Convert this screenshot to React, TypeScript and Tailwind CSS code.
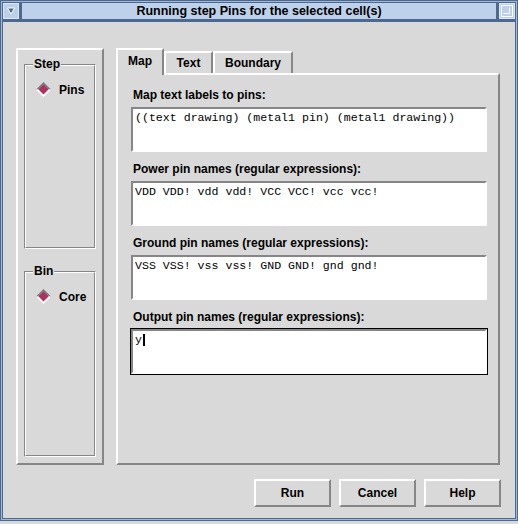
import React from "react";

const raised =
  "border-2 border-t-white border-l-white border-r-[#868686] border-b-[#868686]";
const sunken =
  "border-2 border-t-[#868686] border-l-[#868686] border-r-white border-b-white";

function Radio({ label }: { label: string }) {
  return (
    <div className="flex items-center gap-[8px] pl-[10px] pt-[16px]">
      <svg width="15" height="15" viewBox="0 0 15 15">
        <polygon points="7.5,0 15,7.5 0,7.5" fill="#7e7e7e" />
        <polygon points="0,7.5 15,7.5 7.5,15" fill="#ffffff" />
        <polygon points="7.5,2.5 12.5,7.5 7.5,12.5 2.5,7.5" fill="#b03060" />
      </svg>
      <span className="text-[12px] font-bold leading-[14px]">{label}</span>
    </div>
  );
}

function GroupBox({ title, option, h }: { title: string; option: string; h: string }) {
  return (
    <div className={`relative w-[72px] border border-t-[#868686] border-l-[#868686] border-r-white border-b-white ${h}`}>
      <div className="h-full border border-t-white border-l-white border-r-[#868686] border-b-[#868686]">
        <Radio label={option} />
      </div>
      <span className="absolute left-[8px] top-[-8px] bg-[#d9d9d9] px-px text-[12px] font-bold leading-[14px]">
        {title}
      </span>
    </div>
  );
}

function Field({ label, value, focus }: { label: string; value: string; focus?: boolean }) {
  return (
    <div className="flex flex-col">
      <div className="pl-[3px] text-[12px] font-bold leading-[14px]">{label}</div>
      <div className={`mt-[4px] w-[358px] border ${focus ? "border-black" : "border-transparent"}`}>
        <div className={`h-[45px] bg-white px-[2px] pt-[1px] ${sunken}`}>
          <div className="flex items-center font-['Liberation_Mono',monospace] text-[11.6px] leading-[15px] text-black">
            <span className="whitespace-pre">{value}</span>
            {focus && <span className="ml-px h-[12px] w-[2px] bg-black" />}
          </div>
        </div>
      </div>
    </div>
  );
}

function Btn({ label }: { label: string }) {
  return (
    <button className={`flex h-[28px] w-[77px] items-center justify-center bg-[#d9d9d9] text-[12px] font-bold ${raised}`}>
      {label}
    </button>
  );
}

export default function App() {
  return (
    <div className="h-[524px] w-[518px] bg-[#d9d9d9] font-['Liberation_Sans',Arial,sans-serif] text-black">
      <div className="h-[521px] border border-[#4b6991] bg-[#a3b7d2] p-px">
        <div className="flex h-full flex-col border border-[#4b6991] bg-[#4b6991]">
          {/* title bar */}
          <div className="flex h-[16px] gap-[3px]">
            <div className="flex w-[16px] items-center justify-center border border-[#dce7f5] bg-[#bcd0ea]">
              <svg width="8" height="8" viewBox="0 0 8 8">
                <polygon points="0.5,1 7.5,1 4,7" fill="#4b6991" stroke="#ffffff" strokeWidth="1" />
              </svg>
            </div>
            <div className="flex flex-1 items-center justify-center bg-[#bdd1eb] text-[12.5px] font-bold leading-[16px]">
              Running step Pins for the selected cell(s)
            </div>
            <div className="flex w-[16px] items-center justify-center border border-[#dce7f5] bg-[#bcd0ea]">
              <svg width="12" height="12" viewBox="0 0 12 12" fill="none" stroke="#ffffff" strokeWidth="1">
                <rect x="0.5" y="0.5" width="11" height="11" />
                <path d="M8.5 2.5V8.5H2.5" />
              </svg>
            </div>
          </div>

          {/* body */}
          <div className="mt-[3px] flex flex-1 flex-col bg-[#d9d9d9]">
            <div className="mt-[26px] flex pl-[13px]">
              {/* left panel */}
              <div className={`flex h-[417px] w-[88px] flex-col pl-[6px] ${raised}`}>
                <div className="mt-[14px]">
                  <GroupBox title="Step" option="Pins" h="h-[185px]" />
                </div>
                <div className="mt-[22px]">
                  <GroupBox title="Bin" option="Core" h="h-[186px]" />
                </div>
              </div>

              {/* right notebook */}
              <div className="ml-[12px] flex w-[384px] flex-col">
                <div className="flex h-[25px] items-end">
                  <div className="relative z-10 -mb-[2px] flex h-[27px] w-[48px] items-start justify-center border-2 border-b-0 border-t-white border-l-white border-r-[#868686] bg-[#d9d9d9] pt-[4px] text-[12px] font-bold leading-[14px]">
                    Map
                  </div>
                  <div className="flex h-[22px] w-[49px] items-center justify-center border-2 border-b-0 border-t-white border-l-white border-r-[#868686] text-[12px] font-bold">
                    Text
                  </div>
                  <div className="flex h-[22px] w-[80px] items-center justify-center border-2 border-b-0 border-t-white border-l-white border-r-[#868686] text-[12px] font-bold">
                    Boundary
                  </div>
                </div>
                <div className={`flex h-[392px] flex-col gap-[9px] pl-[12px] pt-[13px] ${raised}`}>
                  <Field label="Map text labels to pins:" value="((text drawing) (metal1 pin) (metal1 drawing))" />
                  <Field label="Power pin names (regular expressions):" value="VDD VDD! vdd vdd! VCC VCC! vcc vcc!" />
                  <Field label="Ground pin names (regular expressions):" value="VSS VSS! vss vss! GND GND! gnd gnd!" />
                  <Field label="Output pin names (regular expressions):" value="y" focus />
                </div>
              </div>
            </div>

            <div className="mt-[14px] flex justify-end gap-[8px] pr-[14px]">
              <Btn label="Run" />
              <Btn label="Cancel" />
              <Btn label="Help" />
            </div>
          </div>
        </div>
      </div>
    </div>
  );
}
